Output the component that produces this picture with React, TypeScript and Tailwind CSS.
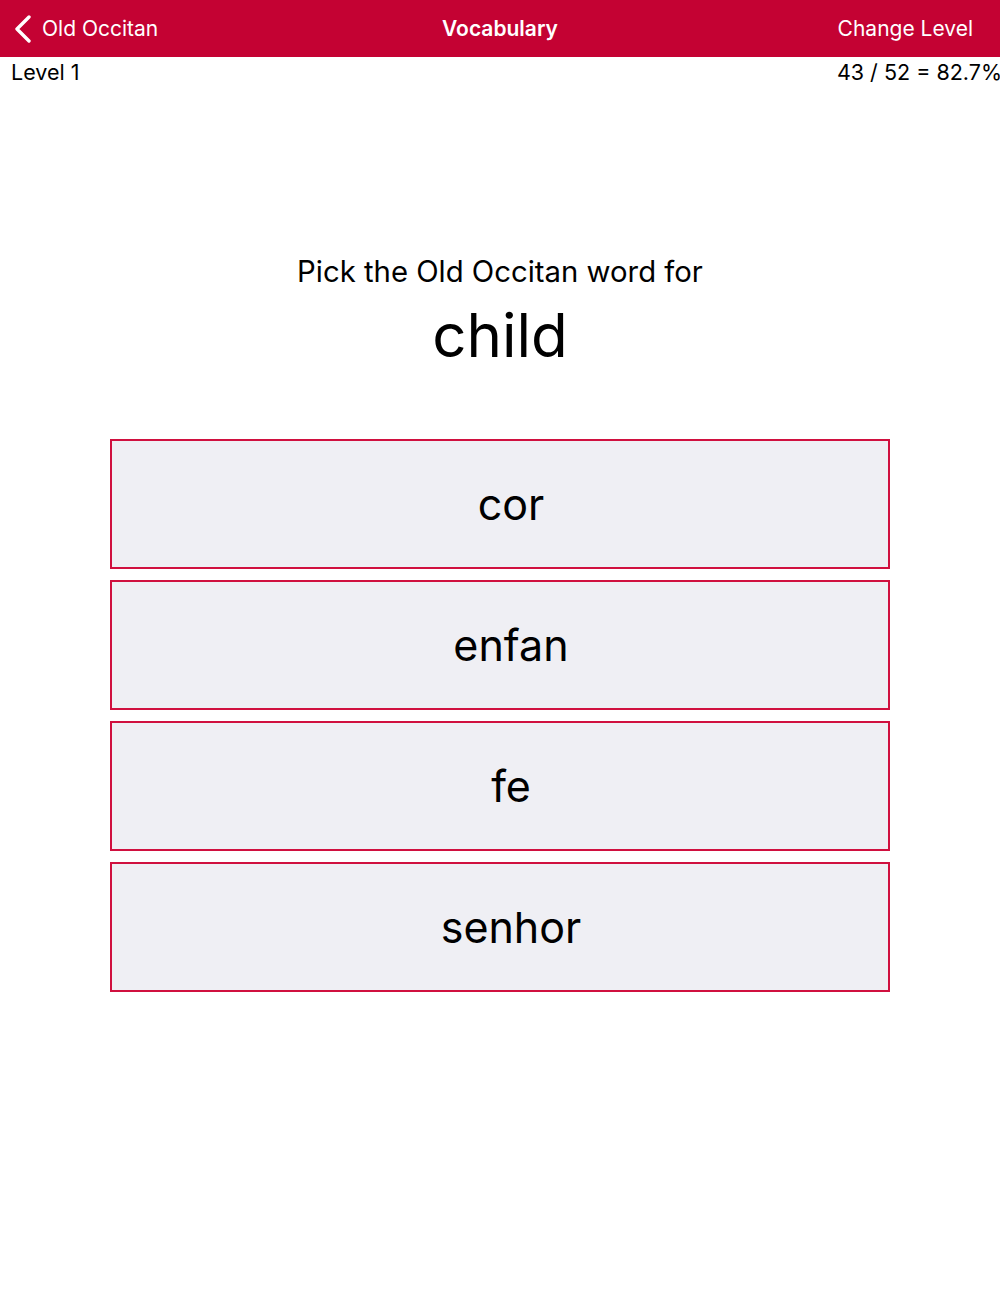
const choices = ['cor', 'enfan', 'fe', 'senhor']

export default function App() {
  return (
    <div className="w-[1000px] h-[1307px] bg-white text-black font-['Inter','Liberation_Sans',sans-serif]">
      <div className="h-[57px] bg-[#c40233] flex items-center justify-between text-white text-[21px] relative">
        <div className="flex items-center pl-[14px] gap-[8px]">
          <svg width="20" height="28" viewBox="0 0 20 28" fill="none" stroke="white" strokeWidth="3.4" strokeLinecap="round" strokeLinejoin="round">
            <polyline points="15,2 3,14 15,26" />
          </svg>
          <span>Old Occitan</span>
        </div>
        <span className="absolute left-1/2 -translate-x-1/2 font-semibold">Vocabulary</span>
        <span className="pr-[27px]">Change Level</span>
      </div>
      <div className="flex justify-between text-[21.5px] leading-[28px] pt-[1px]">
        <span className="pl-[11px]">Level 1</span>
        <span className="-mr-[2px]">43 / 52 = 82.7%</span>
      </div>
      <div className="text-center mt-[168px]">
        <div className="text-[29.3px] leading-[36px]">Pick the Old Occitan word for</div>
        <div className="text-[60px] leading-[80px] mt-[5px]">child</div>
      </div>
      <div className="mx-[110px] mt-[64px] flex flex-col gap-[11px]">
        {choices.map(c => (
          <div key={c} className="h-[130px] border-2 border-[#d0103f] bg-[#efeff4] flex items-center justify-center pl-[22px] text-[43px]">
            {c}
          </div>
        ))}
      </div>
    </div>
  )
}
